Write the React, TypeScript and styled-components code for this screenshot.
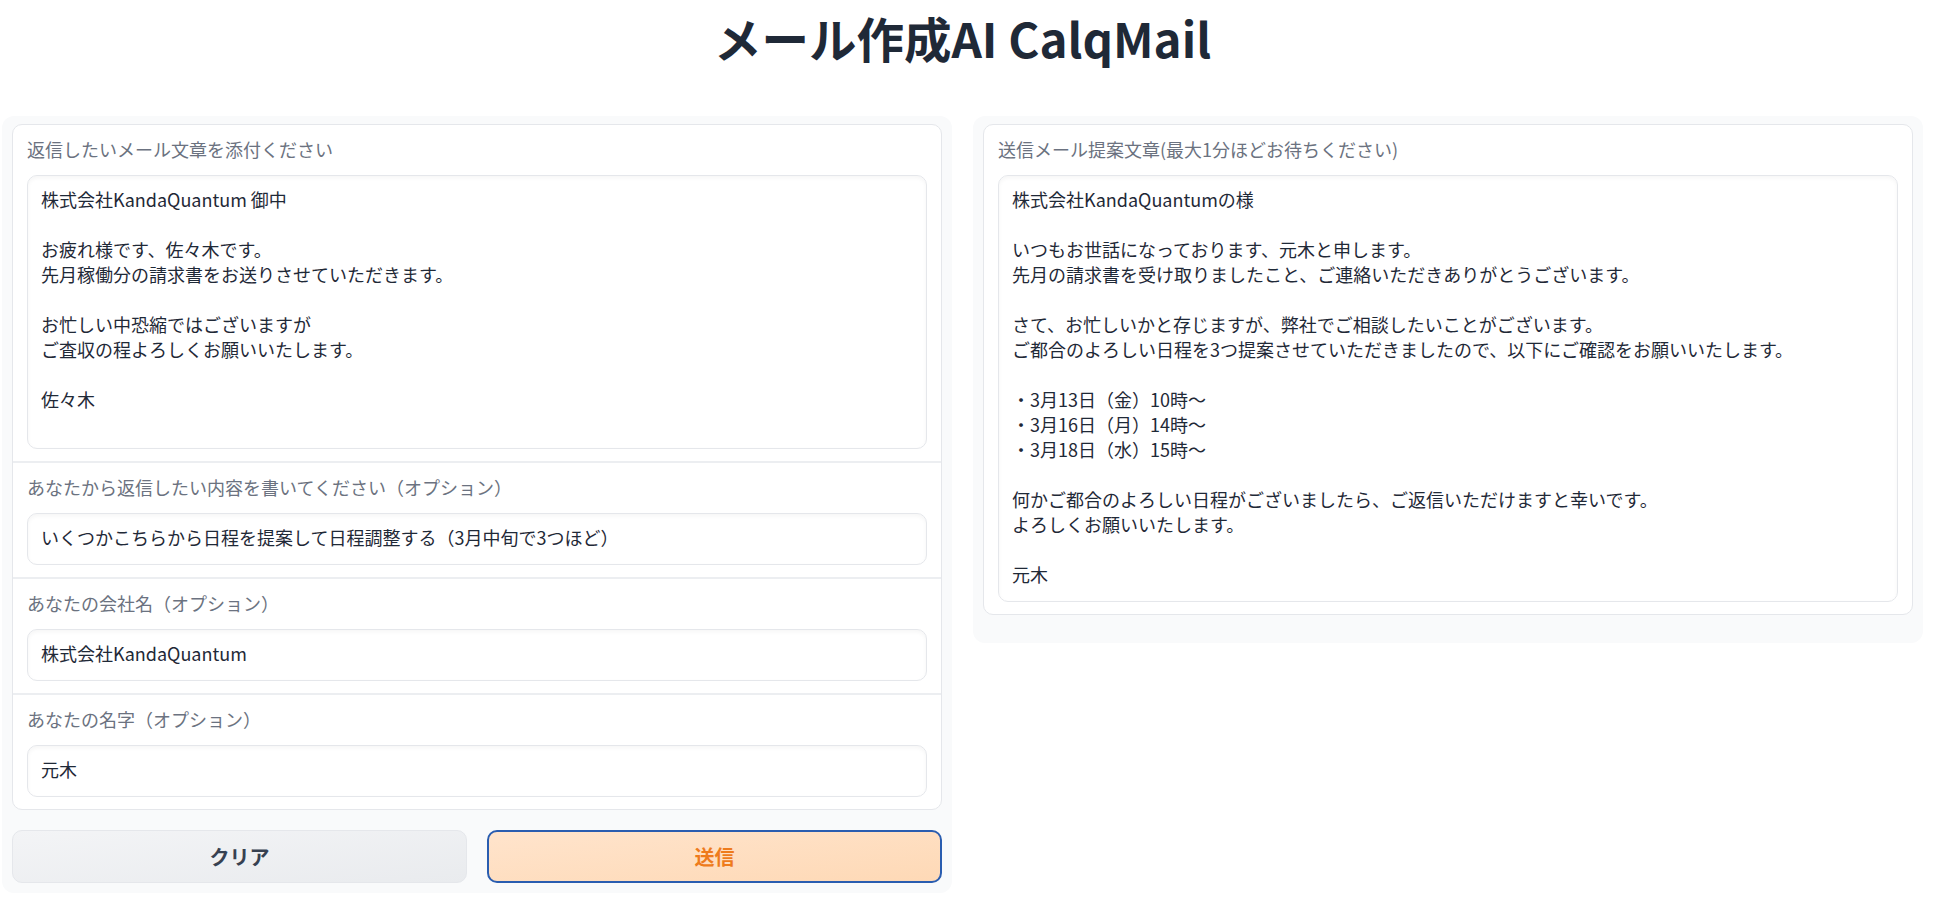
import React from "react";
import styled, { createGlobalStyle } from "styled-components";

const GlobalStyle = createGlobalStyle`
  body {
    margin: 0;
    background: #ffffff;
    font-family: "Noto Sans CJK JP", "Noto Sans", sans-serif;
    color: #1f2937;
  }
`;

const sourceMail = `株式会社KandaQuantum 御中

お疲れ様です、佐々木です。
先月稼働分の請求書をお送りさせていただきます。

お忙しい中恐縮ではございますが
ご査収の程よろしくお願いいたします。

佐々木`;

const replyMail = `株式会社KandaQuantumの様

いつもお世話になっております、元木と申します。
先月の請求書を受け取りましたこと、ご連絡いただきありがとうございます。

さて、お忙しいかと存じますが、弊社でご相談したいことがございます。
ご都合のよろしい日程を3つ提案させていただきましたので、以下にご確認をお願いいたします。

・3月13日（金）10時〜
・3月16日（月）14時〜
・3月18日（水）15時〜

何かご都合のよろしい日程がございましたら、ご返信いただけますと幸いです。
よろしくお願いいたします。

元木`;

const optionFields = [
  { label: "あなたから返信したい内容を書いてください（オプション）", value: "いくつかこちらから日程を提案して日程調整する（3月中旬で3つほど）" },
  { label: "あなたの会社名（オプション）", value: "株式会社KandaQuantum" },
  { label: "あなたの名字（オプション）", value: "元木" },
];

const App = () => {
  return (
    <>
      <GlobalStyle />
      <StyledPage>
        <StyledTitle>メール作成AI CalqMail</StyledTitle>
        <StyledColumns>
          <StyledPanel $bottom={10}>
            <StyledCard>
              <StyledBlock>
                <StyledLabel>返信したいメール文章を添付ください</StyledLabel>
                <StyledField $height={274} value={sourceMail} readOnly />
              </StyledBlock>
              {optionFields.map((f) => (
                <StyledBlock key={f.label}>
                  <StyledLabel>{f.label}</StyledLabel>
                  <StyledField $height={52} value={f.value} readOnly />
                </StyledBlock>
              ))}
            </StyledCard>
            <StyledButtons>
              <StyledButton $variant="secondary">クリア</StyledButton>
              <StyledButton $variant="primary">送信</StyledButton>
            </StyledButtons>
          </StyledPanel>
          <StyledPanel $bottom={28}>
            <StyledCard>
              <StyledBlock>
                <StyledLabel>送信メール提案文章(最大1分ほどお待ちください)</StyledLabel>
                <StyledField $height={427} value={replyMail} readOnly />
              </StyledBlock>
            </StyledCard>
          </StyledPanel>
        </StyledColumns>
      </StyledPage>
    </>
  );
};

const StyledPage = styled.div`
  padding: 0 27px 16px 2px;
`;

const StyledTitle = styled.h1`
  margin: 0 0 48px;
  padding-top: 8px;
  height: 60px;
  line-height: 60px;
  text-align: center;
  font-size: 47.5px;
  font-weight: 700;
  color: #1f2937;
`;

const StyledColumns = styled.div`
  display: grid;
  grid-template-columns: 1fr 1fr;
  gap: 21px;
  align-items: start;
`;

const StyledPanel = styled.div<{ $bottom: number }>`
  display: flex;
  flex-direction: column;
  gap: 20px;
  padding: 8px 10px ${(p) => p.$bottom}px;
  background: #f9fafb;
  border-radius: 12px;
`;

const StyledCard = styled.div`
  display: flex;
  flex-direction: column;
  background: #ffffff;
  border: 1px solid #e5e7eb;
  border-radius: 10px;
  overflow: hidden;
`;

const StyledBlock = styled.div`
  padding: 11px 14px 12.5px;
  & + & {
    border-top: 2px solid #eceef1;
  }
`;

const StyledLabel = styled.div`
  font-size: 18px;
  line-height: 26px;
  color: #6b7280;
  margin-bottom: 12.5px;
`;

const StyledField = styled.textarea<{ $height: number }>`
  display: block;
  width: 100%;
  box-sizing: border-box;
  height: ${(p) => p.$height}px;
  padding: 11px 13px 13px;
  border: 1px solid #e5e7eb;
  border-radius: 10px;
  box-shadow: inset 0 2px 4px rgba(0, 0, 0, 0.04);
  background: #ffffff;
  font-family: inherit;
  font-size: 18px;
  line-height: 25px;
  color: #1f2937;
  resize: none;
  overflow: hidden;
  outline: none;
`;

const StyledButtons = styled.div`
  display: grid;
  grid-template-columns: 1fr 1fr;
  gap: 20px;
`;

const StyledButton = styled.button<{ $variant: "primary" | "secondary" }>`
  height: 53px;
  border-radius: 10px;
  font-family: inherit;
  font-size: 20px;
  font-weight: 700;
  cursor: pointer;
  background: ${(p) =>
    p.$variant === "primary"
      ? "linear-gradient(to bottom right, #ffe4cc, #fed9b6)"
      : "linear-gradient(to bottom right, #f3f4f6, #e9ebee)"};
  border: ${(p) => (p.$variant === "primary" ? "2px solid #2a5db0" : "1px solid #e5e7eb")};
  color: ${(p) => (p.$variant === "primary" ? "#ee7b1c" : "#374151")};
`;

export default App;
